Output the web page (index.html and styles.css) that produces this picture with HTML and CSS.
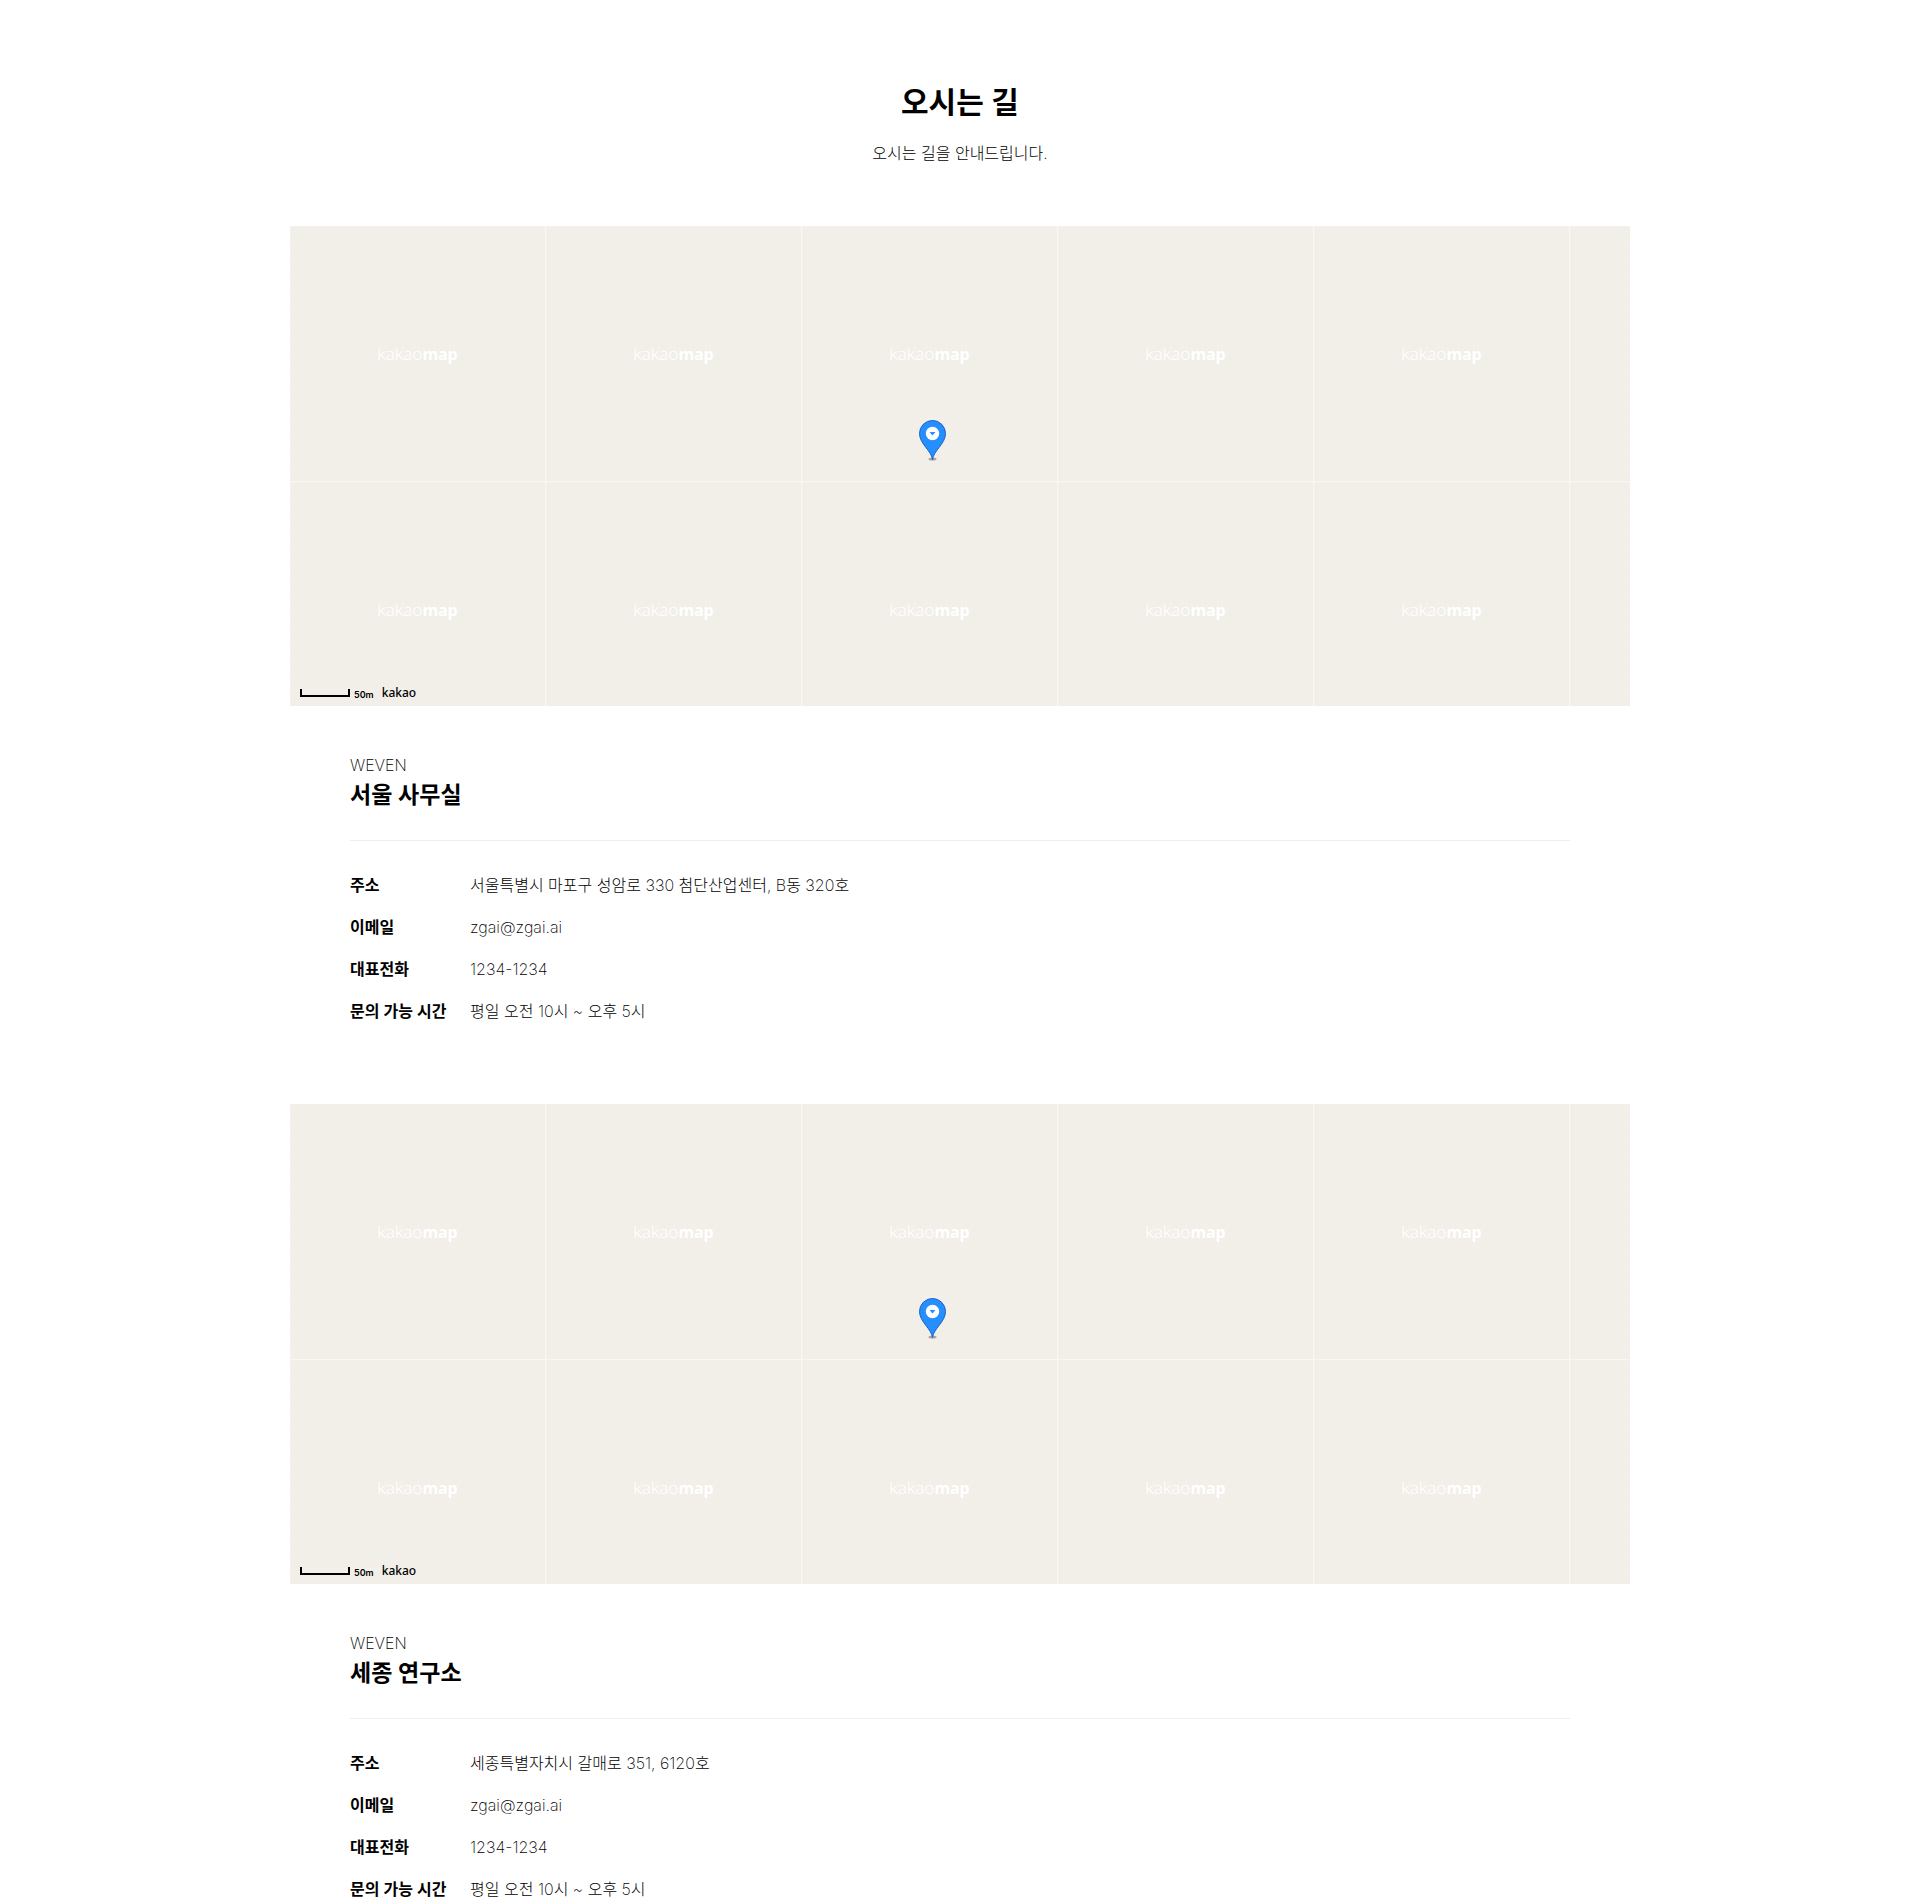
FILE: index.html
```
<!DOCTYPE html>
<html lang="ko">
<head>
    <meta charset="UTF-8">
    <meta name="viewport" content="width=device-width, initial-scale=1.0">
    <title>오시는 길</title>
    <link rel="stylesheet" href="styles.css">
</head>
<body>
    <main class="container">
        <header class="page-title">
            <h1>오시는 길</h1>
            <p>오시는 길을 안내드립니다.</p>
        </header>

        <section class="location">
            <div class="map">
                <div class="tiles"></div>
                <svg class="marker" viewBox="0 0 29 42">
                    <ellipse cx="14.5" cy="40" rx="4" ry="1.5" fill="#000" opacity="0.3"/>
                    <path d="M14.5 41C14 32 1.5 25 1.500 14.500a13 13 0 0 1 26 0C27.500 25 15 32 14.500 41z" fill="#258fff" stroke="#1a61c8"/>
                    <circle cx="14.5" cy="14.5" r="6.700" fill="#fff"/>
                    <path d="M11.500 13h6l-3 3.500z" fill="#258fff"/>
                </svg>
                <div class="map-info">
                    <span class="scale-bar"></span>
                    <span class="scale-text">50m</span>
                    <span class="map-logo">kakao</span>
                </div>
            </div>
            <div class="info">
                <div class="info-head">
                    <p>WEVEN</p>
                    <h2>서울 사무실</h2>
                </div>
                <dl>
                    <dt>주소</dt>
                    <dd>서울특별시 마포구 성암로 330 첨단산업센터, B동 320호</dd>
                    <dt>이메일</dt>
                    <dd>zgai@zgai.ai</dd>
                    <dt>대표전화</dt>
                    <dd>1234-1234</dd>
                    <dt>문의 가능 시간</dt>
                    <dd>평일 오전 10시 ~ 오후 5시</dd>
                </dl>
            </div>
        </section>

        <section class="location">
            <div class="map">
                <div class="tiles"></div>
                <svg class="marker" viewBox="0 0 29 42">
                    <ellipse cx="14.5" cy="40" rx="4" ry="1.5" fill="#000" opacity="0.3"/>
                    <path d="M14.5 41C14 32 1.5 25 1.500 14.500a13 13 0 0 1 26 0C27.500 25 15 32 14.500 41z" fill="#258fff" stroke="#1a61c8"/>
                    <circle cx="14.5" cy="14.5" r="6.700" fill="#fff"/>
                    <path d="M11.500 13h6l-3 3.500z" fill="#258fff"/>
                </svg>
                <div class="map-info">
                    <span class="scale-bar"></span>
                    <span class="scale-text">50m</span>
                    <span class="map-logo">kakao</span>
                </div>
            </div>
            <div class="info">
                <div class="info-head">
                    <p>WEVEN</p>
                    <h2>세종 연구소</h2>
                </div>
                <dl>
                    <dt>주소</dt>
                    <dd>세종특별자치시 갈매로 351, 6120호</dd>
                    <dt>이메일</dt>
                    <dd>zgai@zgai.ai</dd>
                    <dt>대표전화</dt>
                    <dd>1234-1234</dd>
                    <dt>문의 가능 시간</dt>
                    <dd>평일 오전 10시 ~ 오후 5시</dd>
                </dl>
            </div>
        </section>
    </main>

    <script>
        const COLUMNS = 6;
        const ROWS = 2;

        document.querySelectorAll(".tiles").forEach(tiles => {
            for (let i = 0; i < COLUMNS * ROWS; i++) {
                const tile = document.createElement("div");
                tile.className = "tile";
                // the last column is mostly clipped, so it has no label
                if (i % COLUMNS < COLUMNS - 1) {
                    tile.innerHTML = "<span>kakao<b>map</b></span>";
                }
                tiles.appendChild(tile);
            }
        });
    </script>
</body>
</html>
```
FILE: styles.css
```
* {
    box-sizing: border-box;
    margin: 0;
    padding: 0;
}

body {
    font-family: Inter, "Noto Sans CJK KR", sans-serif;
    font-size: 16px;
    font-weight: 200;
    line-height: 26px;
    color: #000;
    background-color: #fff;
}

.container {
    max-width: 1340px;
    margin: 0 auto;
    padding-top: 80px;
}

.page-title {
    text-align: center;
    margin-bottom: 60px;
}

.page-title h1 {
    font-size: 30px;
    font-weight: 600;
    line-height: 44px;
    margin-bottom: 16px;
}

.map {
    position: relative;
    height: 480px;
    overflow: hidden;
    background-color: #f2efe9;
}

.tiles {
    display: grid;
    grid-template-columns: repeat(6, 256px);
    grid-auto-rows: 256px;
}

.tile {
    display: flex;
    align-items: center;
    justify-content: center;
    border-right: 1px solid #f8f7f3;
    border-bottom: 1px solid #f8f7f3;
    background-image:
        linear-gradient(to right, #f3f1ec 1px, transparent 1px),
        linear-gradient(to bottom, #f3f1ec 1px, transparent 1px);
    background-size: 16px 16px;
    font-family: "Noto Sans", sans-serif;
    font-size: 17px;
    font-weight: 300;
    line-height: 24px;
    color: #fff;
}

.tile b {
    font-size: 16px;
    font-weight: 700;
}

.marker {
    position: absolute;
    top: 193px;
    left: calc(50% - 42px);
    width: 29px;
    height: 42px;
}

.map-info {
    position: absolute;
    left: 10px;
    bottom: 6px;
    display: flex;
    align-items: flex-end;
    line-height: 14px;
}

.scale-bar {
    width: 50px;
    height: 8px;
    margin-bottom: 3px;
    border: 2px solid #000;
    border-top: 0;
}

.scale-text {
    margin: 0 8px 0 4px;
    font-size: 9px;
    font-weight: 600;
    line-height: 10px;
}

.map-logo {
    font-family: "Noto Sans", sans-serif;
    font-size: 12px;
    font-weight: 500;
}

.info {
    padding: 46px 60px 80px;
}

.info-head {
    padding-bottom: 28px;
    border-bottom: 1px solid #eee;
}

.info-head h2 {
    font-size: 23px;
    font-weight: 600;
    line-height: 34px;
}

dl {
    display: grid;
    grid-template-columns: 120px 1fr;
    row-gap: 16px;
    padding-top: 31px;
}

dt {
    font-weight: 600;
}
```
